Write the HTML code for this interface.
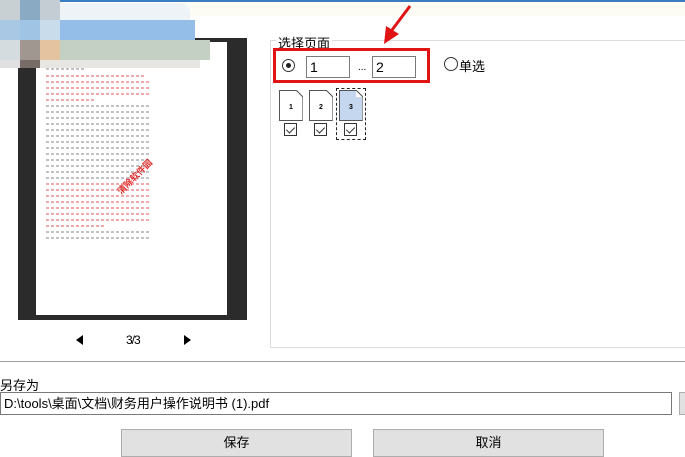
<!DOCTYPE html>
<html><head><meta charset="utf-8"><style>
*{margin:0;padding:0;box-sizing:border-box}
body{width:685px;height:457px;background:#fff;position:relative;overflow:hidden;font-family:"Liberation Sans","Noto Sans CJK SC",sans-serif;font-size:12px;color:#000}
.a{position:absolute}
.ln{position:absolute;left:46px;height:2px;background:repeating-linear-gradient(90deg,#999 0 3px,transparent 3px 5px);opacity:.6}
.r{background:repeating-linear-gradient(90deg,#e87070 0 3px,transparent 3px 5px)}
.btn{position:absolute;top:429px;height:28px;background:#e1e1e1;border:1px solid #adadad;text-align:center;line-height:26px;font-size:13px}
.pg{position:absolute;top:90px;width:24px;height:31px;border:1px solid #555;border-right-color:#999;background:#fff;font-size:7px;font-weight:bold;text-align:center;line-height:34px}
.pg:before{content:"";position:absolute;right:-1px;top:-1px;width:7px;height:7px;background:linear-gradient(45deg,#fff 0 45%,#555 45% 55%,#fff 55%)}
.cb{position:absolute;top:123px;width:13px;height:13px;border:1px solid #333;background:#fff}
.cb:after{content:"";position:absolute;left:3px;top:1px;width:4px;height:7px;border:solid #333;border-width:0 1px 1px 0;transform:rotate(45deg)}
</style></head><body>
<div class="a" style="left:60px;top:0;width:625px;height:2px;background:#3a7cc0"></div>
<div class="a" style="left:0;top:2px;width:685px;height:14px;background:#fdfcf4"></div>
<div class="a" style="left:18px;top:38px;width:229px;height:282px;background:#2b2b2b"></div>
<div class="a" style="left:36px;top:42px;width:191px;height:273px;background:#fff"></div>
<div class="a" style="left:0;top:0;width:20px;height:20px;background:#c8d0d4"></div>
<div class="a" style="left:20px;top:0;width:20px;height:20px;background:#8aaac4"></div>
<div class="a" style="left:40px;top:0;width:20px;height:20px;background:#c4ccd4"></div>
<div class="a" style="left:60px;top:3px;width:130px;height:17px;background:#eef3f8;border-radius:0 10px 0 0"></div>
<div class="a" style="left:0;top:20px;width:20px;height:20px;background:#a8c8e4"></div>
<div class="a" style="left:20px;top:20px;width:20px;height:20px;background:#a0c4e4"></div>
<div class="a" style="left:40px;top:20px;width:20px;height:20px;background:#c8dcec"></div>
<div class="a" style="left:60px;top:20px;width:135px;height:20px;background:#94bee8"></div>
<div class="a" style="left:0;top:40px;width:20px;height:20px;background:#d4dce0"></div>
<div class="a" style="left:20px;top:40px;width:20px;height:20px;background:#a09890"></div>
<div class="a" style="left:40px;top:40px;width:20px;height:20px;background:#e4c4a0"></div>
<div class="a" style="left:60px;top:40px;width:150px;height:20px;background:#c4d0c4"></div>
<div class="a" style="left:0;top:60px;width:20px;height:8px;background:#e0e0e0"></div>
<div class="a" style="left:20px;top:60px;width:20px;height:8px;background:#786c68"></div>
<div class="a" style="left:40px;top:60px;width:160px;height:8px;background:#e8e6e2"></div>
<div class="ln" style="top:68px;width:40px"></div>
<div class="ln r" style="top:75px;width:100px"></div>
<div class="ln r" style="top:81px;width:104px"></div>
<div class="ln r" style="top:87px;width:104px"></div>
<div class="ln r" style="top:93px;width:104px"></div>
<div class="ln r" style="top:99px;width:50px"></div>
<div class="ln" style="top:105px;width:104px"></div>
<div class="ln" style="top:111px;width:104px"></div>
<div class="ln" style="top:117px;width:104px"></div>
<div class="ln" style="top:123px;width:104px"></div>
<div class="ln" style="top:129px;width:104px"></div>
<div class="ln" style="top:135px;width:104px"></div>
<div class="ln" style="top:141px;width:104px"></div>
<div class="ln" style="top:147px;width:104px"></div>
<div class="ln" style="top:153px;width:104px"></div>
<div class="ln" style="top:159px;width:104px"></div>
<div class="ln" style="top:165px;width:104px"></div>
<div class="ln" style="top:171px;width:104px"></div>
<div class="ln" style="top:177px;width:104px"></div>
<div class="ln r" style="top:183px;width:104px"></div>
<div class="ln r" style="top:189px;width:104px"></div>
<div class="ln r" style="top:195px;width:104px"></div>
<div class="ln r" style="top:201px;width:104px"></div>
<div class="ln r" style="top:207px;width:104px"></div>
<div class="ln r" style="top:213px;width:104px"></div>
<div class="ln r" style="top:219px;width:104px"></div>
<div class="ln r" style="top:225px;width:60px"></div>
<div class="ln" style="top:231px;width:104px"></div>
<div class="ln" style="top:237px;width:104px"></div>
<div class="a" style="left:112px;top:170px;color:#e03030;font-size:9px;font-weight:bold;transform:rotate(-45deg)">清除软件园</div>
<div class="a" style="left:76px;top:335px;width:0;height:0;border-top:5px solid transparent;border-bottom:5px solid transparent;border-right:7px solid #000"></div>
<div class="a" style="left:126px;top:333px;font-size:12px;letter-spacing:-1px">3/3</div>
<div class="a" style="left:184px;top:335px;width:0;height:0;border-top:5px solid transparent;border-bottom:5px solid transparent;border-left:7px solid #000"></div>
<div class="a" style="left:270px;top:40px;width:420px;height:308px;border:1px solid #dcdcdc"></div>
<div class="a" style="left:276px;top:33px;background:#fff;padding:0 2px;font-size:13px">选择页面</div>
<div class="a" style="left:273px;top:48px;width:157px;height:35px;border:3px solid #e01414"></div>
<div class="a" style="left:282px;top:59px;width:13px;height:13px;border:1px solid #333;border-radius:50%;background:#fff"></div>
<div class="a" style="left:286px;top:63px;width:5px;height:5px;border-radius:50%;background:#222"></div>
<div class="a" style="left:306px;top:56px;width:44px;height:22px;border:1px solid #7a7a7a;font-size:14px;padding:2px 3px">1</div>
<div class="a" style="left:358px;top:62px;font-size:10px">...</div>
<div class="a" style="left:372px;top:56px;width:44px;height:22px;border:1px solid #7a7a7a;font-size:14px;padding:2px 3px">2</div>
<div class="a" style="left:444px;top:57px;width:14px;height:14px;border:1px solid #333;border-radius:50%;background:#fff"></div>
<div class="a" style="left:459px;top:56px;font-size:13px">单选</div>
<div class="pg" style="left:279px">1</div>
<div class="pg" style="left:309px">2</div>
<div class="a" style="left:336px;top:88px;width:30px;height:52px;border:1px dashed #222"></div>
<div class="pg" style="left:339px;background:#c5d7ee">3</div>
<div class="cb" style="left:284px"></div>
<div class="cb" style="left:314px"></div>
<div class="cb" style="left:344px"></div>
<svg class="a" style="left:370px;top:0" width="50" height="50"><path d="M40 6 L22 30" stroke="#e01414" stroke-width="3" fill="none"/><path d="M14 44 L16 26 L29 34 Z" fill="#e01414"/></svg>
<div class="a" style="left:0;top:361px;width:685px;height:1px;background:#a0a0a0"></div>
<div class="a" style="left:0;top:375px;font-size:13px">另存为</div>
<div class="a" style="left:0;top:392px;width:672px;height:23px;border:1px solid #7a7a7a;font-size:13px;padding:2px 3px;line-height:17px">D:\tools\桌面\文档\财务用户操作说明书 (1).pdf</div>
<div class="a" style="left:679px;top:392px;width:10px;height:23px;border:1px solid #adadad;background:#e1e1e1"></div>
<div class="btn" style="left:121px;width:231px">保存</div>
<div class="btn" style="left:373px;width:231px">取消</div>
</body></html>
